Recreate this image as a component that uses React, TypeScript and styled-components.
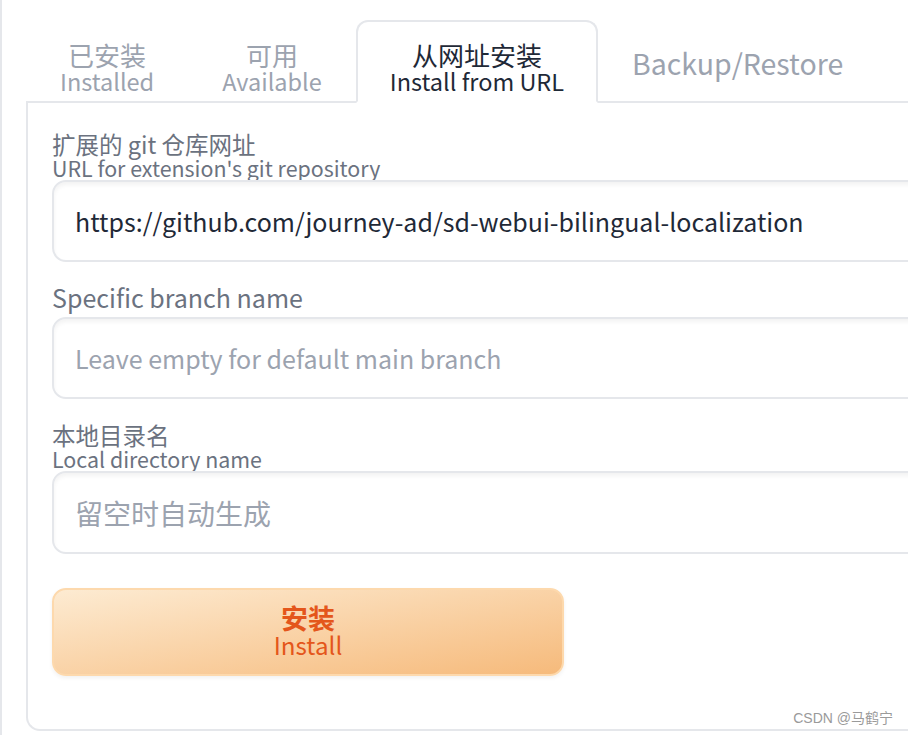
import React from "react";
import styled, { createGlobalStyle } from "styled-components";

const Global = createGlobalStyle`
  html, body { margin: 0; padding: 0; background: #ffffff; overflow: hidden; }
  body { font-family: "Noto Sans CJK SC", "Noto Sans", sans-serif; }
  * { box-sizing: border-box; }
`;

const Page = styled.div`
  position: relative;
  width: 908px;
  height: 735px;
  overflow: hidden;
  border-left: 2px solid #e5e7eb;
  padding: 20px 0 0 24px;
`;

const TabBar = styled.div`
  display: flex;
  align-items: flex-start;
  height: 81px;
  position: relative;
  z-index: 1;
`;

const Tab = styled.div<{ $active?: boolean }>`
  height: 83px;
  flex: none;
  display: flex;
  flex-direction: column;
  align-items: center;
  justify-content: center;
  padding: 12px 32px 0;
  border: 2px solid ${(p) => (p.$active ? "#e5e7eb" : "transparent")};
  border-bottom: 2px solid ${(p) => (p.$active ? "#ffffff" : "transparent")};
  border-radius: 12px 12px 0 0;
  background: ${(p) => (p.$active ? "#ffffff" : "transparent")};
  color: ${(p) => (p.$active ? "#1f2937" : "#9ca3af")};
  line-height: 27px;
  white-space: nowrap;
`;

const TabCn = styled.span`
  display: block;
  font-size: 26px;
`;

const TabEn = styled.span`
  display: block;
  font-size: 23.5px;
`;

const SingleTab = styled(Tab)`
  padding-top: 2px;
  padding-bottom: 0;
  font-size: 28.5px;
`;

const Panel = styled.div`
  width: 1000px;
  height: 630px;
  border: 2px solid #e5e7eb;
  border-right: none;
  border-radius: 0 0 0 14px;
  padding: 30px 0 0 24px;
  display: flex;
  flex-direction: column;
`;

const Field = styled.div<{ $gap?: number }>`
  display: flex;
  flex-direction: column;
  margin-bottom: ${(p) => p.$gap ?? 22}px;
`;

const LabelCn = styled.div`
  color: #6b7280;
  font-size: 23.5px;
  line-height: 23px;
  white-space: nowrap;
`;

const LabelEn = styled.div`
  color: #6b7280;
  font-size: 21.4px;
  line-height: 23px;
  margin-bottom: 1px;
  white-space: nowrap;
`;

const SingleLabel = styled.div`
  color: #6b7280;
  font-size: 25px;
  line-height: 26px;
  margin-bottom: 7px;
  white-space: nowrap;
`;

const Input = styled.div<{ $placeholder?: boolean; $cjk?: boolean; $h?: number }>`
  width: 1000px;
  height: ${(p) => p.$h ?? 82}px;
  border: 2px solid #e5e7eb;
  border-radius: 14px;
  box-shadow: inset 0 3px 4px rgba(0, 0, 0, 0.05);
  padding: 0 21px;
  display: flex;
  align-items: center;
  font-size: ${(p) => (p.$cjk ? 28 : 25)}px;
  color: ${(p) => (p.$placeholder ? "#9ca3af" : "#1f2937")};
  white-space: nowrap;
`;

const InstallButton = styled.div`
  margin-top: 12px;
  width: 512px;
  height: 88px;
  border: 2px solid #fdd9ad;
  border-radius: 14px;
  background: linear-gradient(to bottom right, #fdebd2, #f6ba7b);
  box-shadow: 0 2px 4px rgba(0, 0, 0, 0.06);
  display: flex;
  flex-direction: column;
  align-items: center;
  justify-content: center;
  padding-bottom: 3px;
  color: #e4561b;
  line-height: 27px;
`;

const BtnCn = styled.span`
  font-weight: 700;
  font-size: 27px;
`;

const BtnEn = styled.span`
  font-size: 24.2px;
`;

const Watermark = styled.div`
  position: absolute;
  right: 15px;
  bottom: 8px;
  font-family: "Liberation Sans", "Noto Sans CJK SC", sans-serif;
  font-size: 14px;
  color: #9a9a9a;
`;

export default function App() {
  return (
    <>
      <Global />
      <Page>
        <TabBar>
          <Tab>
            <TabCn>已安装</TabCn>
            <TabEn>Installed</TabEn>
          </Tab>
          <Tab>
            <TabCn>可用</TabCn>
            <TabEn>Available</TabEn>
          </Tab>
          <Tab $active>
            <TabCn>从网址安装</TabCn>
            <TabEn>Install from URL</TabEn>
          </Tab>
          <SingleTab>Backup/Restore</SingleTab>
        </TabBar>
        <Panel>
          <Field>
            <LabelCn>扩展的 git 仓库网址</LabelCn>
            <LabelEn>URL for extension's git repository</LabelEn>
            <Input>https://github.com/journey-ad/sd-webui-bilingual-localization</Input>
          </Field>
          <Field $gap={25}>
            <SingleLabel>Specific branch name</SingleLabel>
            <Input $placeholder>Leave empty for default main branch</Input>
          </Field>
          <Field>
            <LabelCn>本地目录名</LabelCn>
            <LabelEn>Local directory name</LabelEn>
            <Input $placeholder $cjk $h={83}>留空时自动生成</Input>
          </Field>
          <InstallButton>
            <BtnCn>安装</BtnCn>
            <BtnEn>Install</BtnEn>
          </InstallButton>
        </Panel>
        <Watermark>CSDN @马鹤宁</Watermark>
      </Page>
    </>
  );
}
